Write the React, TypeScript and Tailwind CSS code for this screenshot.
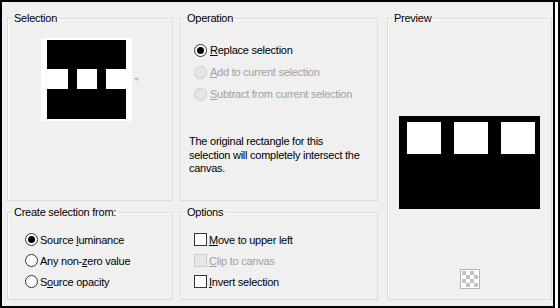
import React from "react";

const font = { fontFamily: '"Liberation Sans", Arial, sans-serif' };

function Group({
  label,
  className,
  children,
}: {
  label: string;
  className: string;
  children?: React.ReactNode;
}) {
  return (
    <fieldset
      className={`border border-[#dcdcdc] shadow-[inset_1px_1px_0_#ffffff] ${className}`}
    >
      <legend className="ml-[4px] px-[2px] text-[11px] leading-[14px] text-black">
        {label}
      </legend>
      {children}
    </fieldset>
  );
}

function Radio({ checked, disabled }: { checked?: boolean; disabled?: boolean }) {
  return (
    <span
      className={`flex h-[13px] w-[13px] shrink-0 items-center justify-center rounded-full border ${
        disabled ? "border-[#cccccc] bg-[#e6e6e6]" : "border-[#333333] bg-white"
      }`}
    >
      {checked && <span className="h-[7px] w-[7px] rounded-full bg-black" />}
    </span>
  );
}

function Check({ disabled }: { disabled?: boolean }) {
  return (
    <span
      className={`h-[13px] w-[13px] shrink-0 border ${
        disabled ? "border-[#cccccc] bg-[#e6e6e6]" : "border-[#333333] bg-white"
      }`}
    />
  );
}

function Label({
  pre,
  u,
  post,
  disabled,
}: {
  pre?: string;
  u: string;
  post: string;
  disabled?: boolean;
}) {
  return (
    <span className={`text-[11px] leading-[14px] ${disabled ? "text-[#a0a0a0]" : "text-black"}`}>
      {pre}
      <u className="underline-offset-[1px]">{u}</u>
      {post}
    </span>
  );
}

function CheckerIcon() {
  const cells = [];
  for (let r = 0; r < 4; r++)
    for (let c = 0; c < 4; c++)
      if ((r + c) % 2 === 0)
        cells.push(<rect key={`${r}-${c}`} x={2 + c * 4} y={2 + r * 4} width={4} height={4} fill="#c2c2c2" />);
  return (
    <svg width="20" height="20" viewBox="0 0 20 20">
      <rect x="0.5" y="0.5" width="19" height="19" fill="#ffffff" stroke="#b4b4b4" />
      {cells}
    </svg>
  );
}

export default function App() {
  return (
    <div
      className="h-[308px] w-[560px] border-t-2 border-r-2 border-black bg-white tracking-[-0.25px]"
      style={font}
    >
      <div className="flex h-[306px] w-[555px] gap-[7px] border-x-2 border-b-2 border-black bg-[#f0f0f0] pt-[9px] pl-[5px]">
        {/* left column */}
        <div className="flex w-[166px] flex-col gap-[4px]">
          <Group label="Selection" className="h-[190px]">
            <div className="mt-[13px] ml-[33px] flex items-center gap-[2px]">
              <div className="flex h-[83px] w-[91px] flex-col bg-white px-[6px] py-[2px]">
                <div className="h-[29px] bg-black" />
                <div className="flex h-[20px]">
                  <div className="ml-[21px] w-[9px] bg-black" />
                  <div className="ml-[20px] w-[9px] bg-black" />
                </div>
                <div className="h-[30px] bg-black" />
              </div>
              <svg width="5" height="3" viewBox="0 0 5 3">
                <path d="M0 0h5L2.5 3z" fill="#b8b8b8" />
              </svg>
            </div>
          </Group>
          <Group label="Create selection from:" className="h-[95px]">
            <div className="ml-[17px] pt-[10px]">
              <div className="flex h-[21px] items-center gap-[2px]">
                <Radio checked />
                <Label pre="Source " u="l" post="uminance" />
              </div>
              <div className="flex h-[21px] items-center gap-[2px]">
                <Radio />
                <Label pre="Any non-" u="z" post="ero value" />
              </div>
              <div className="flex h-[21px] items-center gap-[2px]">
                <Radio />
                <Label pre="S" u="o" post="urce opacity" />
              </div>
            </div>
          </Group>
        </div>

        {/* middle column */}
        <div className="flex w-[198px] flex-col gap-[4px]">
          <Group label="Operation" className="h-[190px]">
            <div className="ml-[13px] pt-[14px]">
              <div className="flex h-[22px] items-center gap-[3px]">
                <Radio checked />
                <Label u="R" post="eplace selection" />
              </div>
              <div className="flex h-[22px] items-center gap-[3px]">
                <Radio disabled />
                <Label u="A" post="dd to current selection" disabled />
              </div>
              <div className="flex h-[22px] items-center gap-[3px]">
                <Radio disabled />
                <Label u="S" post="ubtract from current selection" disabled />
              </div>
            </div>
            <p className="mt-[30px] ml-[8px] w-[172px] text-[11px] leading-[13.5px] text-black">
              The original rectangle for this selection will completely intersect the canvas.
            </p>
          </Group>
          <Group label="Options" className="h-[95px]">
            <div className="ml-[13px] pt-[10px]">
              <div className="flex h-[21px] items-center gap-[2px]">
                <Check />
                <Label u="M" post="ove to upper left" />
              </div>
              <div className="flex h-[21px] items-center gap-[2px]">
                <Check disabled />
                <Label u="C" post="lip to canvas" disabled />
              </div>
              <div className="flex h-[21px] items-center gap-[2px]">
                <Check />
                <Label u="I" post="nvert selection" />
              </div>
            </div>
          </Group>
        </div>

        {/* preview */}
        <Group label="Preview" className="ml-[2px] flex h-[289px] w-[165px] flex-col items-center">
          <div className="mt-[91px] flex h-[93px] w-[141px] gap-[13px] bg-black pt-[6px] pl-[8px]">
            <div className="h-[32px] w-[34px] bg-white" />
            <div className="h-[32px] w-[34px] bg-white" />
            <div className="h-[32px] w-[34px] bg-white" />
          </div>
          <div className="mt-[60px]">
            <CheckerIcon />
          </div>
        </Group>
      </div>
    </div>
  );
}
